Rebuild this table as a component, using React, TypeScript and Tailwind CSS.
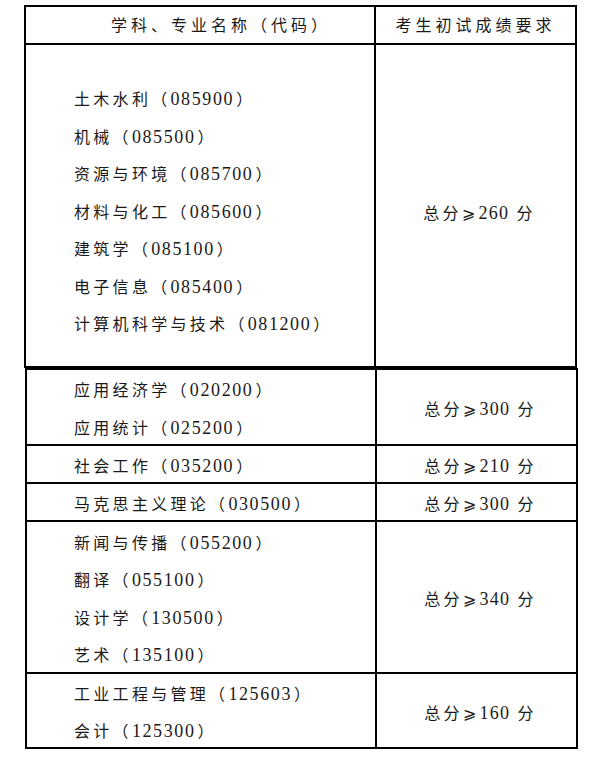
import React from 'react';

type Row = { majors: string[]; score: string; h: string };

const rows: Row[] = [
  { majors: ['应用经济学（020200）', '应用统计（025200）'], score: '300', h: 'h-[76px]' },
  { majors: ['社会工作（035200）'], score: '210', h: 'h-[38px]' },
  { majors: ['马克思主义理论（030500）'], score: '300', h: 'h-[38px]' },
  { majors: ['新闻与传播（055200）', '翻译（055100）', '设计学（130500）', '艺术（135100）'], score: '340', h: 'h-[152px]' },
  { majors: ['工业工程与管理（125603）', '会计（125300）'], score: '160', h: 'h-[73px]' },
];

const firstBlock = [
  '土木水利（085900）',
  '机械（085500）',
  '资源与环境（085700）',
  '材料与化工（085600）',
  '建筑学（085100）',
  '电子信息（085400）',
  '计算机科学与技术（081200）',
];

// split "名称（代码）" so the digits can get their own size
const Major = ({ text }: { text: string }) => {
  const [name, rest] = text.split('（');
  const code = rest.replace('）', '');
  return (
    <div>
      {name}（<span className="text-[18px] tracking-[1.6px]">{code}</span>
      <span className="pl-[2px]">）</span>
    </div>
  );
};

const Score = ({ value }: { value: string }) => (
  <span>
    总分<span className="font-['DejaVu_Sans']">⩾</span>
    <span className="text-[18px] tracking-[1.2px]">{value}</span> 分
  </span>
);

export default function App() {
  return (
    <div className="min-h-screen bg-white pt-[5px] text-[16px] tracking-[3.3px] text-[#1a1a1a] font-['Liberation_Serif','Noto_Sans_CJK_SC',serif]">
      {/* first table: header + engineering block */}
      <div className="ml-[24px] w-[553px] border-2 border-black">
        <div className="flex h-[38px] border-b-2 border-black tracking-[4px]">
          <div className="flex w-[350px] items-center justify-center border-r-2 border-black pt-[1px] pl-[42px]">
            学科、专业名称（代码）
          </div>
          <div className="flex flex-1 items-center justify-center pt-[1px]">考生初试成绩要求</div>
        </div>
        <div className="flex h-[321px]">
          <div className="w-[350px] border-r-2 border-black pl-[48px] pt-[36px] leading-[37.5px]">
            {firstBlock.map((m) => (
              <Major key={m} text={m} />
            ))}
          </div>
          <div className="flex flex-1 items-center justify-center pt-[16px] pl-[8px]">
            <Score value="260" />
          </div>
        </div>
      </div>

      {/* second table */}
      <div className="ml-[25px] w-[553px] border-2 border-black">
        {rows.map((r, i) => (
          <div
            key={i}
            className={`flex ${r.h} ${i < rows.length - 1 ? 'border-b-2 border-black' : ''}`}
          >
            <div className="flex w-[350px] flex-col justify-center border-r-2 border-black pl-[47px] pt-[5px] leading-[37.5px]">
              {r.majors.map((m) => (
                <Major key={m} text={m} />
              ))}
            </div>
            <div className="flex flex-1 items-center justify-center pt-[5px] pl-[8px]">
              <Score value={r.score} />
            </div>
          </div>
        ))}
      </div>
    </div>
  );
}
